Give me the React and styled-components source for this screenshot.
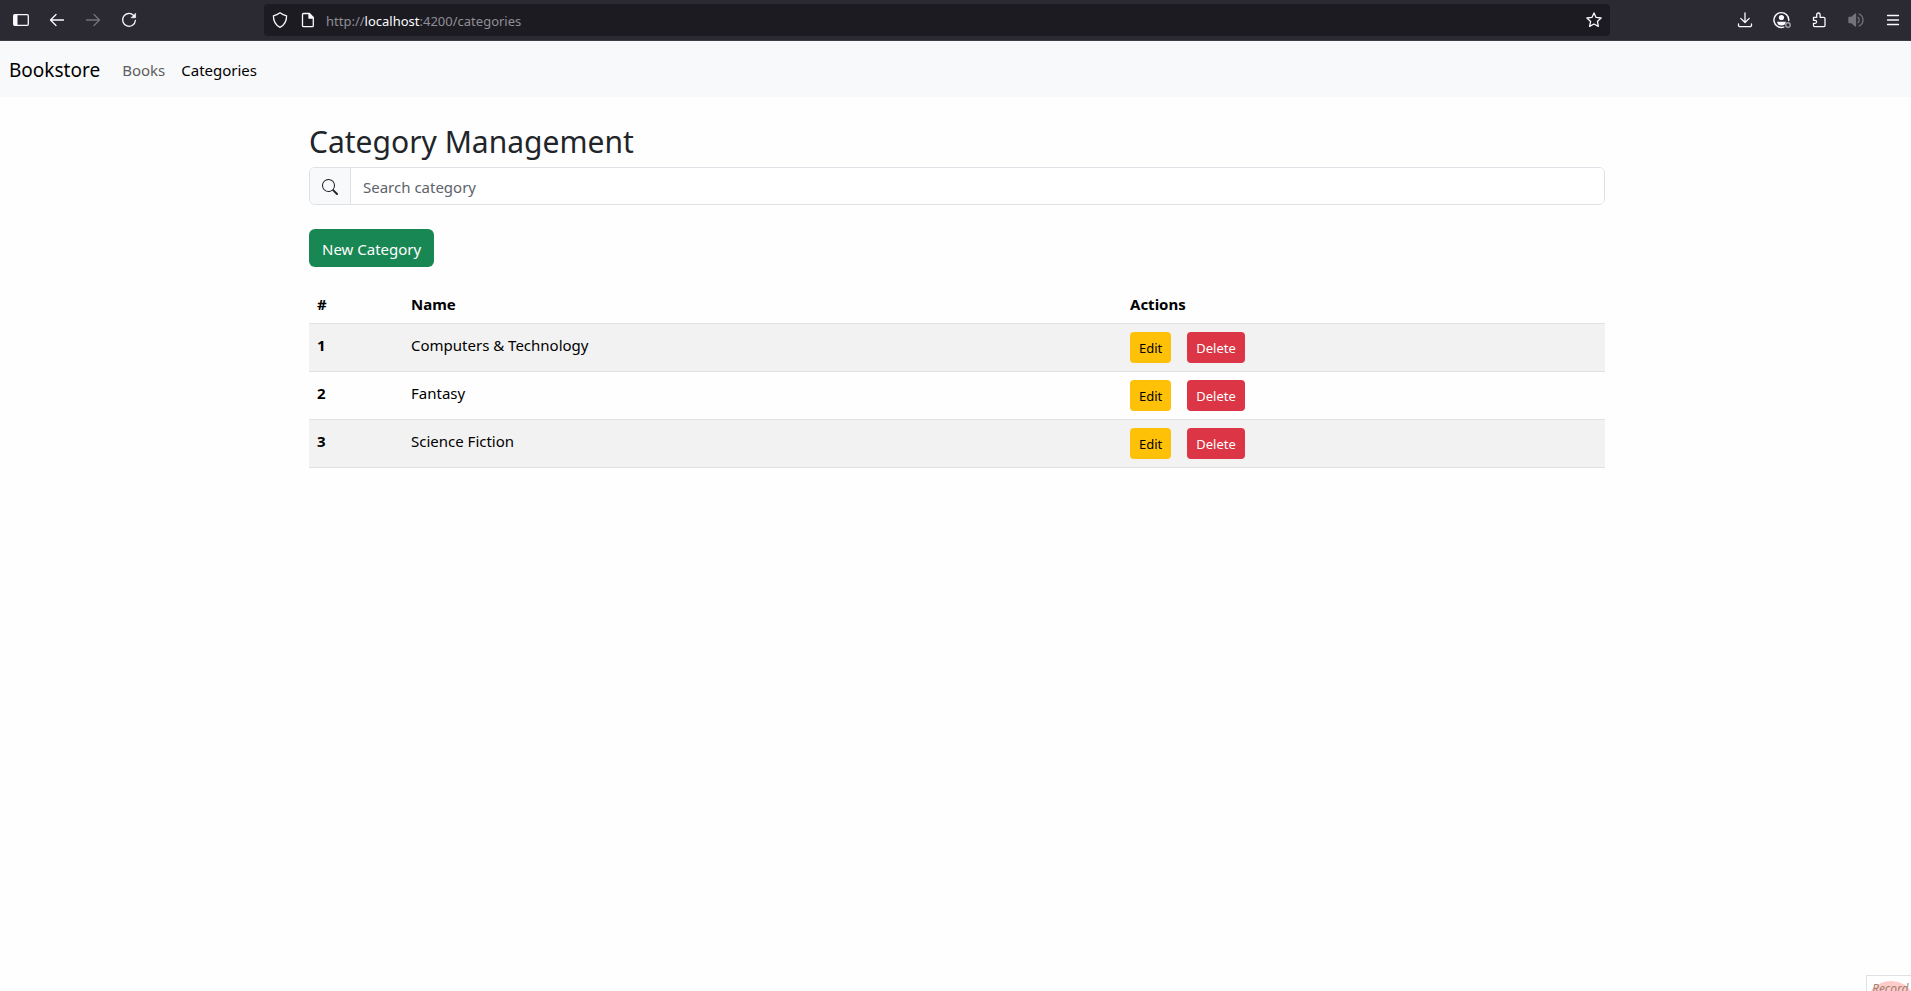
import React from "react";
import styled, { createGlobalStyle, css } from "styled-components";

const GlobalStyle = createGlobalStyle`
  *, *::before, *::after { box-sizing: border-box; }
  body {
    margin: 0;
    background: #fefefe;
    color: #212529;
    font-family: "Segoe UI", "Noto Sans", "Liberation Sans", sans-serif;
    font-size: 15px;
    line-height: 24px;
  }
  button, input { font: inherit; }
`;

const BrowserBar = styled.header`
  display: flex;
  align-items: center;
  height: 41px;
  padding: 0 6px 0 9px;
  background: #2b2a33;
  border-bottom: 1px solid #3d3c46;
`;

const ToolGroup = styled.div`
  display: flex;
  align-items: center;
  gap: ${(p) => (p.$end ? "13px" : "12px")};
`;

const ToolButton = styled.button`
  display: grid;
  place-items: center;
  width: 24px;
  height: 32px;
  padding: 0;
  border: 0;
  border-radius: 4px;
  background: transparent;
  color: ${(p) => (p.$dim ? "#74737d" : "#fbfbfe")};
`;

const AddressBar = styled.div`
  display: flex;
  align-items: center;
  flex: 1;
  gap: 4px;
  height: 32px;
  margin: 0 123px;
  padding: 0 4px;
  border-radius: 4px;
  background: #1c1b22;
`;

const Url = styled.div`
  flex: 1;
  padding: 2px 0 0 2px;
  color: #8f8f96;
  font-size: 13px;
  line-height: 20px;

  b {
    color: #fbfbfe;
    font-weight: 400;
  }
`;

const Navbar = styled.nav`
  display: flex;
  align-items: center;
  gap: 14px;
  height: 56px;
  padding: 2px 9px 0;
  background: #f8f9fa;
`;

const Brand = styled.a`
  color: #000;
  font-size: 19px;
  line-height: 30px;
  text-decoration: none;
`;

const NavLinks = styled.div`
  display: flex;
`;

const NavLink = styled.a`
  padding: 8px;
  color: ${(p) => (p.$active ? "#000" : "#5d5e5f")};
  text-decoration: none;
`;

const Main = styled.main`
  padding: 24px 0 0 3px;
`;

const Container = styled.div`
  max-width: 1320px;
  margin: 0 auto;
  padding: 0 12px;
`;

const Title = styled.h2`
  margin: 0 0 4px;
  font-size: 30px;
  font-weight: 400;
  line-height: 42px;
`;

const SearchGroup = styled.div`
  display: flex;
  height: 38px;
  margin-bottom: 24px;
  border: 1px solid #dee2e6;
  border-radius: 6px;
  overflow: hidden;
`;

const SearchLabel = styled.label`
  display: grid;
  place-items: center;
  width: 41px;
  padding-top: 2px;
  border-right: 1px solid #dee2e6;
  background: #f8f9fa;
`;

const SearchInput = styled.input`
  flex: 1;
  min-width: 0;
  padding: 2px 12px 0;
  border: 0;
  outline: 0;
  background: #fff;
  color: #212529;

  &::placeholder {
    color: #5c636a;
    opacity: 1;
  }
`;

const tones = {
  success: css`background: #198754; color: #fff;`,
  warning: css`background: #ffc107; color: #000;`,
  danger: css`background: #dc3545; color: #fff;`,
};

const Button = styled.button`
  height: ${(p) => (p.$small ? "31px" : "38px")};
  padding: ${(p) => (p.$small ? "1px 9px 0" : "2px 13px 0")};
  border: 0;
  border-radius: ${(p) => (p.$small ? "4px" : "6px")};
  font-size: ${(p) => (p.$small ? "13px" : "15px")};
  ${(p) => tones[p.$tone]}
`;

const Table = styled.table`
  width: 100%;
  margin-top: 16px;
  border-collapse: separate;
  border-spacing: 0;
  table-layout: fixed;
  color: #000;

  tbody tr:nth-child(odd) { background: #f2f2f2; }
`;

const Col = styled.col`
  width: ${(p) => p.$width};
`;

const Cell = styled.td`
  padding: 9px 8px 7px;
  border-bottom: 1px solid #dee2e6;
  text-align: left;
  vertical-align: top;
`;

const ActionCell = styled(Cell)`
  padding: 8px;
`;

const Actions = styled.div`
  display: flex;
  gap: 16px;
`;

const Recorder = styled.aside`
  position: fixed;
  right: 0;
  bottom: 0;
  width: 45px;
  height: 16px;
  overflow: hidden;
  border: solid #dee2e6;
  border-width: 1px 0 0 1px;
  background: #fff;
`;

const RecorderDisc = styled.div`
  width: 46px;
  height: 40px;
  margin: 5px 0 0 1px;
  padding: 1px 0 0 4px;
  border-radius: 50%;
  background: #ffcbc9;
  color: #a08070;
  font-size: 12px;
  font-style: italic;
  line-height: 14px;
`;

const Icon = ({ children, size = 16, width = 1.3 }) => (
  <svg width={size} height={size} viewBox="0 0 16 16" fill="none" stroke="currentColor" strokeWidth={width} strokeLinecap="round" strokeLinejoin="round" aria-hidden="true">
    {children}
  </svg>
);

const categories = ["Computers & Technology", "Fantasy", "Science Fiction"];

export default function App() {
  return (
    <>
      <GlobalStyle />
      <BrowserBar>
        <ToolGroup>
          <ToolButton aria-label="Sidebar">
            <Icon><rect x=".7" y="2.7" width="14.6" height="10.6" rx="1" /><path d="M1 3h3.5v10H1z" fill="currentColor" stroke="none" /></Icon>
          </ToolButton>
          <ToolButton aria-label="Back"><Icon><path d="M14.5 8H1.8M7 2.5 1.5 8 7 13.5" /></Icon></ToolButton>
          <ToolButton aria-label="Forward" $dim><Icon><path d="M1.5 8h12.7M9 2.5 14.5 8 9 13.5" /></Icon></ToolButton>
          <ToolButton aria-label="Reload">
            <Icon><path d="M12.6 3.4A6.4 6.4 0 1 0 14.4 8.5" /><path d="M14.6 1.5v4.3h-4.3z" fill="currentColor" strokeWidth=".6" /></Icon>
          </ToolButton>
        </ToolGroup>
        <AddressBar>
          <ToolButton aria-label="Tracking protection"><Icon><path d="M8 .8c2 1.500 4 2.500 6.600 3C14.600 9.200 12.500 13.200 8 15.300 3.500 13.200 1.400 9.200 1.400 3.800 4 3.300 6 2.300 8 .8z" /></Icon></ToolButton>
          <ToolButton aria-label="Page information"><Icon><path d="M3.500 1.500h5.800l4 4v8.200a1 1 0 0 1-1 1H3.500a1 1 0 0 1-1-1V2.500a1 1 0 0 1 1-1z" /><path d="M9 1.500V6h4.300z" fill="currentColor" /></Icon></ToolButton>
          <Url>http://<b>localhost</b>:4200/categories</Url>
          <ToolButton aria-label="Bookmark"><Icon><path d="m8 .9 2.100 4.500 5 .6-3.700 3.400 1 5L8 12l-4.400 2.400 1-5L.9 6l5-.6z" /></Icon></ToolButton>
        </AddressBar>
        <ToolGroup $end>
          <ToolButton aria-label="Downloads"><Icon><path d="M8 1v9.300M3.800 6.400 8 10.500l4.200-4.100M1.500 11.800v1.500a1.400 1.400 0 0 0 1.400 1.400h10.200a1.400 1.400 0 0 0 1.400-1.400v-1.500" /></Icon></ToolButton>
          <ToolButton aria-label="Account">
            <Icon size={18}><path d="M9.500 14.300A6.600 6.600 0 1 1 14 8.500" /><circle cx="7.500" cy="5.800" r="2.300" fill="currentColor" stroke="none" /><path d="M3.500 9.500h8l-1 2.500c-2 1.300-4 1.300-6 0z" fill="currentColor" stroke="none" /><circle cx="13.300" cy="12.500" r="2" stroke="#9d9ca5" /></Icon>
          </ToolButton>
          <ToolButton aria-label="Extensions"><Icon><path d="M2.500 5.300h3.200V2.700a1.700 1.700 0 0 1 3.400 0v2.600h3.600a1.300 1.300 0 0 1 1.300 1.300v7a1 1 0 0 1-1 1H3.500a1 1 0 0 1-1-1v-2.300h1.600a1.500 1.500 0 0 0 0-3H2.500z" /></Icon></ToolButton>
          <ToolButton aria-label="Sound" $dim><Icon><path d="M1 5.500h2.500L7.500 2v12l-4-3.500H1z" fill="currentColor" /><path d="M10 5.300a3.500 3.500 0 0 1 0 5.400M11 2a6.500 6.500 0 0 1 0 12" /></Icon></ToolButton>
          <ToolButton aria-label="Menu"><Icon><path d="M2.500 3.500h11M2.500 8h11M2.500 12.500h11" /></Icon></ToolButton>
        </ToolGroup>
      </BrowserBar>
      <Navbar>
        <Brand href="#">Bookstore</Brand>
        <NavLinks>
          <NavLink href="#books">Books</NavLink>
          <NavLink href="#categories" $active aria-current="page">Categories</NavLink>
        </NavLinks>
      </Navbar>
      <Main>
        <Container>
          <Title>Category Management</Title>
          <SearchGroup>
            <SearchLabel htmlFor="category-search" aria-label="Search">
              <svg width="16" height="16" viewBox="0 0 16 16" fill="currentColor" aria-hidden="true">
                <path d="M11.742 10.344a6.500 6.500 0 1 0-1.397 1.398h-.001q.044.060.098.115l3.850 3.850a1 1 0 0 0 1.415-1.414l-3.850-3.850a1 1 0 0 0-.115-.1zM12 6.500a5.500 5.500 0 1 1-11 0 5.500 5.500 0 0 1 11 0" />
              </svg>
            </SearchLabel>
            <SearchInput id="category-search" type="text" placeholder="Search category" />
          </SearchGroup>
          <Button $tone="success">New Category</Button>
          <Table>
            <colgroup>
              <Col $width="94px" />
              <Col />
              <Col $width="483px" />
            </colgroup>
            <thead>
              <tr>
                <Cell as="th" scope="col">#</Cell>
                <Cell as="th" scope="col">Name</Cell>
                <Cell as="th" scope="col">Actions</Cell>
              </tr>
            </thead>
            <tbody>
              {categories.map((name, i) => (
                <tr key={name}>
                  <Cell as="th" scope="row">{i + 1}</Cell>
                  <Cell>{name}</Cell>
                  <ActionCell>
                    <Actions>
                      <Button $small $tone="warning">Edit</Button>
                      <Button $small $tone="danger">Delete</Button>
                    </Actions>
                  </ActionCell>
                </tr>
              ))}
            </tbody>
          </Table>
        </Container>
      </Main>
      <Recorder>
        <RecorderDisc>Record</RecorderDisc>
      </Recorder>
    </>
  );
}
